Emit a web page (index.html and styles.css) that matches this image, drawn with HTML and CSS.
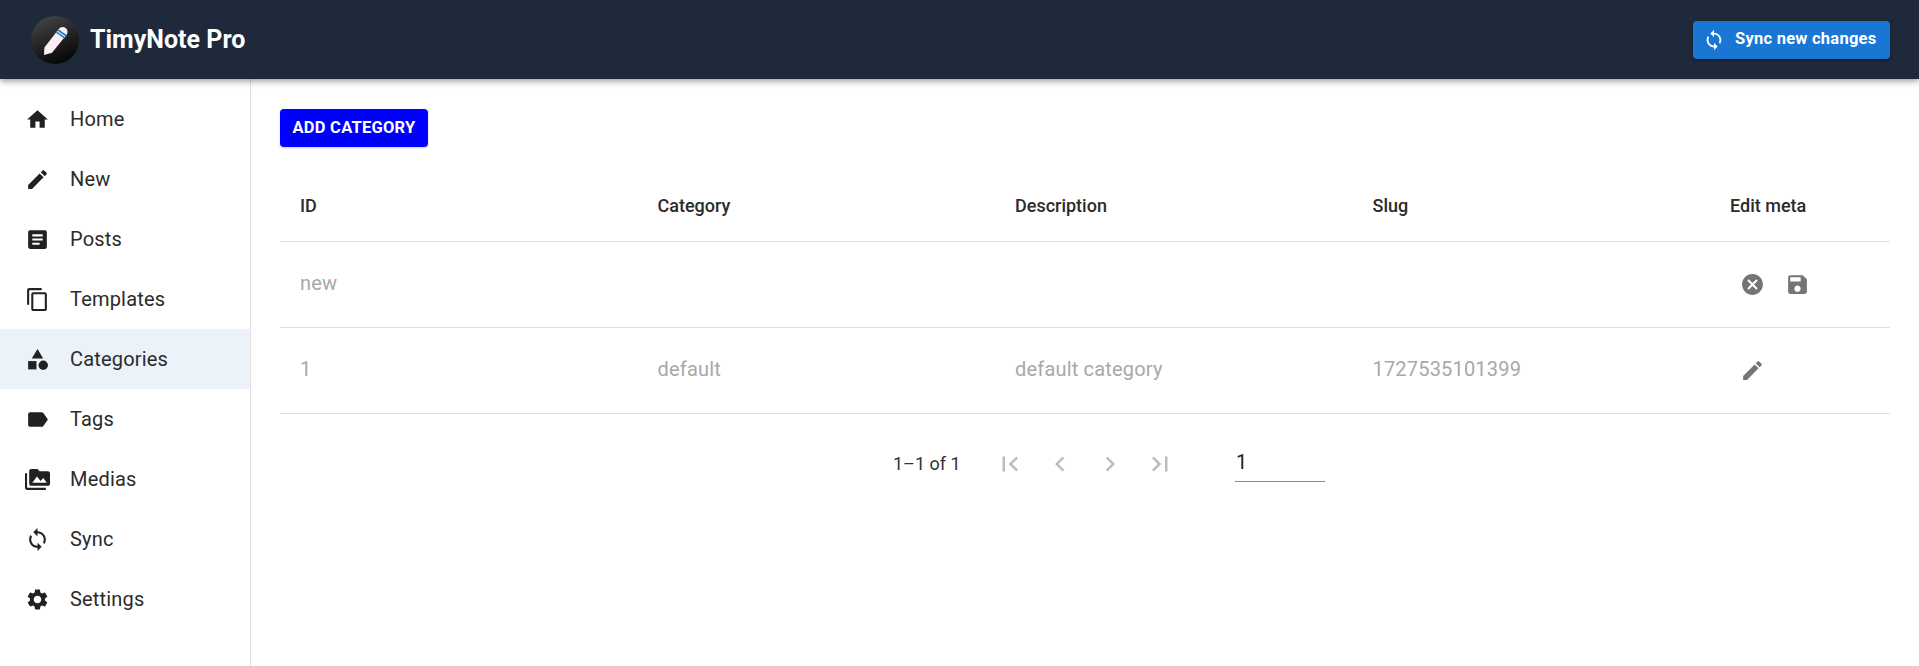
FILE: index.html
```html
<!DOCTYPE html>
<html lang="en">
<head>
<meta charset="utf-8">
<title>TimyNote Pro</title>
<link rel="stylesheet" href="styles.css">
</head>
<body>
<header class="topbar">
  <div class="brand">
    <svg class="logo" viewBox="0 0 48 48">
      <defs>
        <linearGradient id="lg" x1="0.2" y1="0" x2="0.6" y2="1">
          <stop offset="0" stop-color="#454545"/>
          <stop offset="1" stop-color="#060606"/>
        </linearGradient>
      </defs>
      <circle cx="24" cy="24" r="24" fill="url(#lg)"/>
      <path d="M13 39 13.4 31.6 27.6 13.2C29.2 11 32.4 10.4 34.6 12 36.8 13.6 37.2 16.6 35.6 18.8L21 36.8Z" fill="#fdeef6"/>
      <path d="M25.4 16.2 34 22.2M27 14 35.6 20" stroke="#1f7fc4" stroke-width="1.6" fill="none"/>
    </svg>
    <span class="brand-name">TimyNote Pro</span>
  </div>
  <button class="sync-btn">
    <svg class="sync-icon" viewBox="0 0 24 24"><path d="M12 4V1L8 5l4 4V6c3.31 0 6 2.69 6 6 0 1.01-.25 1.97-.7 2.8l1.46 1.46C19.54 15.03 20 13.57 20 12c0-4.42-3.58-8-8-8zm0 14c-3.31 0-6-2.69-6-6 0-1.01.25-1.97.7-2.8L5.24 7.74C4.46 8.97 4 10.43 4 12c0 4.42 3.58 8 8 8v3l4-4-4-4v3z"/></svg>
    Sync new changes
  </button>
</header>
<div class="layout">
  <nav class="sidebar">
    <a class="nav-item"><svg class="nav-icon" viewBox="0 0 24 24"><path d="M10 20v-6h4v6h5v-8h3L12 3 2 12h3v8z"/></svg><span>Home</span></a>
    <a class="nav-item"><svg class="nav-icon" viewBox="0 0 24 24"><path d="M3 17.25V21h3.75L17.81 9.94l-3.75-3.75L3 17.25zM20.71 7.04c.39-.39.39-1.02 0-1.41l-2.34-2.34a.9959.9959 0 0 0-1.41 0l-1.83 1.83 3.75 3.75 1.83-1.83z"/></svg><span>New</span></a>
    <a class="nav-item"><svg class="nav-icon" viewBox="0 0 24 24"><path d="M19 3H5c-1.1 0-2 .9-2 2v14c0 1.1.9 2 2 2h14c1.1 0 2-.9 2-2V5c0-1.1-.9-2-2-2zm-5 14H7v-2h7v2zm3-4H7v-2h10v2zm0-4H7V7h10v2z"/></svg><span>Posts</span></a>
    <a class="nav-item"><svg class="nav-icon" viewBox="0 0 24 24"><path d="M16 1H4c-1.1 0-2 .9-2 2v14h2V3h12V1zm3 4H8c-1.1 0-2 .9-2 2v14c0 1.1.9 2 2 2h11c1.1 0 2-.9 2-2V7c0-1.1-.9-2-2-2zm0 16H8V7h11v14z"/></svg><span>Templates</span></a>
    <a class="nav-item active"><svg class="nav-icon" viewBox="0 0 24 24"><path d="M12 2l-5.5 9h11z"/><circle cx="17.5" cy="17.5" r="4.5"/><path d="M3 13.5h8v8H3z"/></svg><span>Categories</span></a>
    <a class="nav-item"><svg class="nav-icon" viewBox="0 0 24 24"><path d="M17.63 5.84C17.27 5.33 16.67 5 16 5L5 5.01C3.9 5.01 3 5.9 3 7v10c0 1.1.9 1.99 2 1.99L16 19c.67 0 1.27-.33 1.63-.84L22 12l-4.37-6.16z"/></svg><span>Tags</span></a>
    <a class="nav-item"><svg class="nav-icon" viewBox="0 0 24 24"><path d="M2 6H0v5h.01L0 20c0 1.1.9 2 2 2h18v-2H2V6zm20-2h-8l-2-2H6c-1.1 0-1.99.9-1.99 2L4 16c0 1.1.9 2 2 2h16c1.1 0 2-.9 2-2V6c0-1.1-.9-2-2-2zM7 15l4.5-6 3.5 4.51 2.5-3.01L21 15H7z"/></svg><span>Medias</span></a>
    <a class="nav-item"><svg class="nav-icon" viewBox="0 0 24 24"><path d="M12 4V1L8 5l4 4V6c3.31 0 6 2.69 6 6 0 1.01-.25 1.97-.7 2.8l1.46 1.46C19.54 15.03 20 13.57 20 12c0-4.42-3.58-8-8-8zm0 14c-3.31 0-6-2.69-6-6 0-1.01.25-1.97.7-2.8L5.24 7.74C4.46 8.97 4 10.43 4 12c0 4.42 3.58 8 8 8v3l4-4-4-4v3z"/></svg><span>Sync</span></a>
    <a class="nav-item"><svg class="nav-icon" viewBox="0 0 24 24"><path d="M19.14 12.94c.04-.3.06-.61.06-.94 0-.32-.02-.64-.07-.94l2.03-1.58c.18-.14.23-.41.12-.61l-1.92-3.32c-.12-.22-.37-.29-.59-.22l-2.39.96c-.5-.38-1.03-.7-1.62-.94l-.36-2.54c-.04-.24-.24-.41-.48-.41h-3.84c-.24 0-.43.17-.47.41l-.36 2.54c-.59.24-1.13.57-1.62.94l-2.39-.96c-.22-.08-.47 0-.59.22L2.74 8.87c-.12.21-.08.47.12.61l2.03 1.58c-.05.3-.09.63-.09.94s.02.64.07.94l-2.03 1.58c-.18.14-.23.41-.12.61l1.92 3.32c.12.22.37.29.59.22l2.39-.96c.5.38 1.03.7 1.62.94l.36 2.54c.05.24.24.41.48.41h3.84c.24 0 .44-.17.47-.41l.36-2.54c.59-.24 1.13-.56 1.62-.94l2.39.96c.22.08.47 0 .59-.22l1.92-3.32c.12-.22.07-.47-.12-.61l-2.01-1.58zM12 15.6c-1.98 0-3.6-1.62-3.6-3.6s1.62-3.6 3.6-3.6 3.6 1.62 3.6 3.6-1.62 3.6-3.6 3.6z"/></svg><span>Settings</span></a>
  </nav>
  <main class="content">
    <button class="add-btn">ADD CATEGORY</button>
    <div class="table">
      <div class="row head">
        <div class="cell">ID</div>
        <div class="cell">Category</div>
        <div class="cell">Description</div>
        <div class="cell">Slug</div>
        <div class="cell">Edit meta</div>
      </div>
      <div class="row body">
        <div class="cell">new</div>
        <div class="cell"></div>
        <div class="cell"></div>
        <div class="cell"></div>
        <div class="cell actions">
          <span class="act"><svg viewBox="0 0 24 24"><path d="M12 2C6.47 2 2 6.47 2 12s4.47 10 10 10 10-4.47 10-10S17.53 2 12 2zm5 13.59L15.59 17 12 13.41 8.41 17 7 15.59 10.59 12 7 8.41 8.41 7 12 10.59 15.59 7 17 8.41 13.41 12 17 15.59z"/></svg></span>
          <span class="act"><svg viewBox="0 0 24 24"><path d="M17 3H5c-1.11 0-2 .9-2 2v14c0 1.1.89 2 2 2h14c1.1 0 2-.9 2-2V7l-4-4zm-5 16c-1.66 0-3-1.34-3-3s1.34-3 3-3 3 1.34 3 3-1.34 3-3 3zm3-10H5V5h10v4z"/></svg></span>
        </div>
      </div>
      <div class="row body">
        <div class="cell">1</div>
        <div class="cell">default</div>
        <div class="cell">default category</div>
        <div class="cell">1727535101399</div>
        <div class="cell actions">
          <span class="act"><svg viewBox="0 0 24 24"><path d="M3 17.25V21h3.75L17.81 9.94l-3.75-3.75L3 17.25zM20.71 7.04c.39-.39.39-1.02 0-1.41l-2.34-2.34a.9959.9959 0 0 0-1.41 0l-1.83 1.83 3.75 3.75 1.83-1.83z"/></svg></span>
        </div>
      </div>
    </div>
    <div class="pager">
      <span class="range">1–1 of 1</span>
      <div class="pager-btns">
        <span class="pg"><svg viewBox="0 0 24 24"><path d="M18.41 16.59L13.82 12l4.59-4.59L17 6l-6 6 6 6zM6 6h2v12H6z"/></svg></span>
        <span class="pg"><svg viewBox="0 0 24 24"><path d="M15.41 16.59L10.83 12l4.58-4.59L14 6l-6 6 6 6 1.41-1.41z"/></svg></span>
        <span class="pg"><svg viewBox="0 0 24 24"><path d="M8.59 16.59L13.17 12 8.59 7.41 10 6l6 6-6 6-1.41-1.41z"/></svg></span>
        <span class="pg"><svg viewBox="0 0 24 24"><path d="M5.59 7.41L10.18 12l-4.59 4.59L7 18l6-6-6-6zM16 6h2v12h-2z"/></svg></span>
      </div>
      <div class="page-input">1</div>
    </div>
  </main>
</div>
</body>
</html>
```

FILE: styles.css
```css
* { box-sizing: border-box; }
html, body { margin: 0; height: 100%; }
body {
  font-family: Roboto, "Liberation Sans", sans-serif;
  background: #fff;
  color: #212121;
  overflow: hidden;
  display: flex;
  flex-direction: column;
}
.topbar {
  height: 79px;
  flex: none;
  background: #1e293b;
  display: flex;
  align-items: center;
  justify-content: space-between;
  padding: 0 29px 0 31px;
  box-shadow: 0 2px 4px -1px rgba(0,0,0,.2), 0 4px 5px rgba(0,0,0,.14), 0 1px 10px rgba(0,0,0,.12);
  position: relative;
  z-index: 2;
}
.brand { display: flex; align-items: center; gap: 11px; }
.logo { width: 48px; height: 48px; display: block; }
.brand-name { color: #fff; font-size: 25px; font-weight: 700; }
.sync-btn {
  width: 197px;
  height: 38px;
  border: 0;
  border-radius: 4px;
  background: #1976d2;
  color: #fff;
  font: 700 16.5px Roboto, sans-serif;
  letter-spacing: .015em;
  display: flex;
  align-items: center;
  gap: 10px;
  padding: 0 0 2px 10px;
  box-shadow: 0 3px 1px -2px rgba(0,0,0,.2), 0 2px 2px rgba(0,0,0,.14), 0 1px 5px rgba(0,0,0,.12);
}
.sync-icon { width: 22px; height: 22px; fill: #fff; flex: none; margin-top: 2px; }
.layout { flex: 1; display: flex; min-height: 0; }
.sidebar {
  width: 251px;
  flex: none;
  border-right: 1px solid #e0e0e0;
  padding-top: 10px;
}
.nav-item {
  height: 60px;
  display: flex;
  align-items: center;
  padding-left: 25px;
  gap: 20px;
  font-size: 20px;
  letter-spacing: .00938em;
  color: #2b2b2b;
}
.nav-item.active { background: #ebf2fa; }
.nav-icon { width: 25px; height: 25px; fill: #212121; flex: none; }
.content { flex: 1; padding: 30px 29px 0; min-width: 0; }
.add-btn {
  width: 148px;
  height: 38px;
  display: block;
  border: 0;
  border-radius: 4px;
  background: #0000ff;
  color: #fff;
  font: 700 16.5px Roboto, sans-serif;
  letter-spacing: .015em;
  padding: 0 0 2px;
  box-shadow: 0 1px 2px rgba(0,0,0,.2);
}
.table { margin-top: 22px; }
.row {
  display: grid;
  grid-template-columns: repeat(4, 357.5px) 180px;
  align-items: center;
  border-bottom: 1px solid #e0e0e0;
}
.head { height: 73px; font-size: 18px; font-weight: 500; color: #2b2b2b; }
.body { height: 86px; font-size: 20px; letter-spacing: .00938em; color: #a8a8a8; padding-bottom: 3px; }
.cell { padding-left: 20px; }
.actions { display: flex; gap: 5px; padding-left: 22px; padding-top: 3px; }
.act { width: 40px; height: 40px; display: flex; align-items: center; justify-content: center; }
.act svg { width: 25px; height: 25px; fill: #757575; }
.pager {
  display: flex;
  align-items: center;
  height: 100px;
  padding-left: 613px;
  font-size: 18px;
}
.range { width: 97px; color: #333; padding-bottom: 1px; }
.pager-btns { display: flex; gap: 10px; }
.pg { width: 40px; height: 40px; display: flex; align-items: center; justify-content: center; }
.pg svg { width: 30px; height: 30px; fill: #bdbdbd; }
.page-input {
  width: 90px;
  height: 35px;
  margin-left: 55px;
  padding: 3px 0 0 1px;
  font-size: 20px;
  color: #212121;
  border-bottom: 1px solid #8a8a8a;
}
```
